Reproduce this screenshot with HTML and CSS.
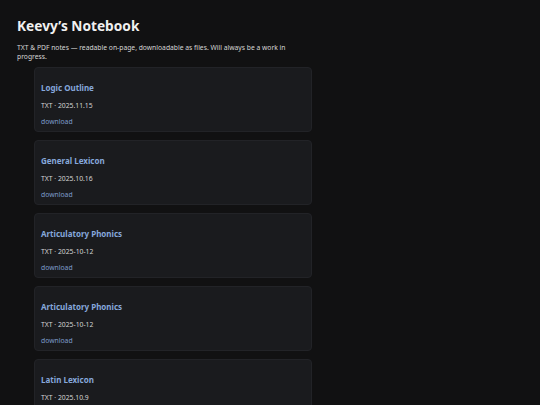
FILE: index.html
```html
<!DOCTYPE html>
<html lang="en">
<head>
<meta charset="utf-8">
<title>Keevy’s Notebook</title>
<link rel="stylesheet" href="styles.css">
</head>
<body>
<header class="intro">
  <h1 class="site-title">Keevy’s Notebook</h1>
  <p class="tagline">TXT &amp; PDF notes — readable on-page, downloadable as files. Will always be a work in progress.</p>
</header>
<main class="notes">
  <article class="note">
    <h2 class="note-title">Logic Outline</h2>
    <p class="note-meta">TXT · 2025.11.15</p>
    <a class="note-link" href="#">download</a>
  </article>
  <article class="note">
    <h2 class="note-title">General Lexicon</h2>
    <p class="note-meta">TXT · 2025.10.16</p>
    <a class="note-link" href="#">download</a>
  </article>
  <article class="note">
    <h2 class="note-title">Articulatory Phonics</h2>
    <p class="note-meta">TXT · 2025-10-12</p>
    <a class="note-link" href="#">download</a>
  </article>
  <article class="note">
    <h2 class="note-title">Articulatory Phonics</h2>
    <p class="note-meta">TXT · 2025-10-12</p>
    <a class="note-link" href="#">download</a>
  </article>
  <article class="note">
    <h2 class="note-title">Latin Lexicon</h2>
    <p class="note-meta">TXT · 2025.10.9</p>
    <a class="note-link" href="#">download</a>
  </article>
</main>
</body>
</html>
```

FILE: styles.css
```css
html, body {
  margin: 0;
  background: #111112;
}

body {
  font-family: "Noto Sans", "Open Sans", sans-serif;
  color: #e6e6e6;
  padding: 17px 17px 0;
}

.intro {
  width: 280px;
}

.site-title {
  margin: 0;
  font-size: 13.7px;
  font-weight: 700;
  line-height: 18px;
  color: #f0f0f0;
}

.tagline {
  margin: 7.5px 0 0;
  font-size: 6.75px;
  line-height: 9px;
  color: #d6d6d6;
}

.notes {
  display: flex;
  flex-direction: column;
  gap: 8px;
  margin: 6.5px 0 0 17px;
  width: 278px;
}

.note {
  box-sizing: border-box;
  height: 65px;
  flex: none;
  padding: 14.5px 6px 0;
  background: #1a1b1e;
  border: 1px solid #222327;
  border-radius: 4px;
}

.note-title {
  margin: 0;
  font-size: 8px;
  font-weight: 700;
  line-height: 10px;
  color: #86a8dc;
}

.note-meta {
  margin: 8px 0 0;
  font-size: 6.8px;
  line-height: 10px;
  color: #d4d4d4;
}

.note-link {
  display: block;
  margin-top: 6px;
  font-size: 6.8px;
  line-height: 10px;
  color: #7d9ccc;
  text-decoration: none;
}
```
